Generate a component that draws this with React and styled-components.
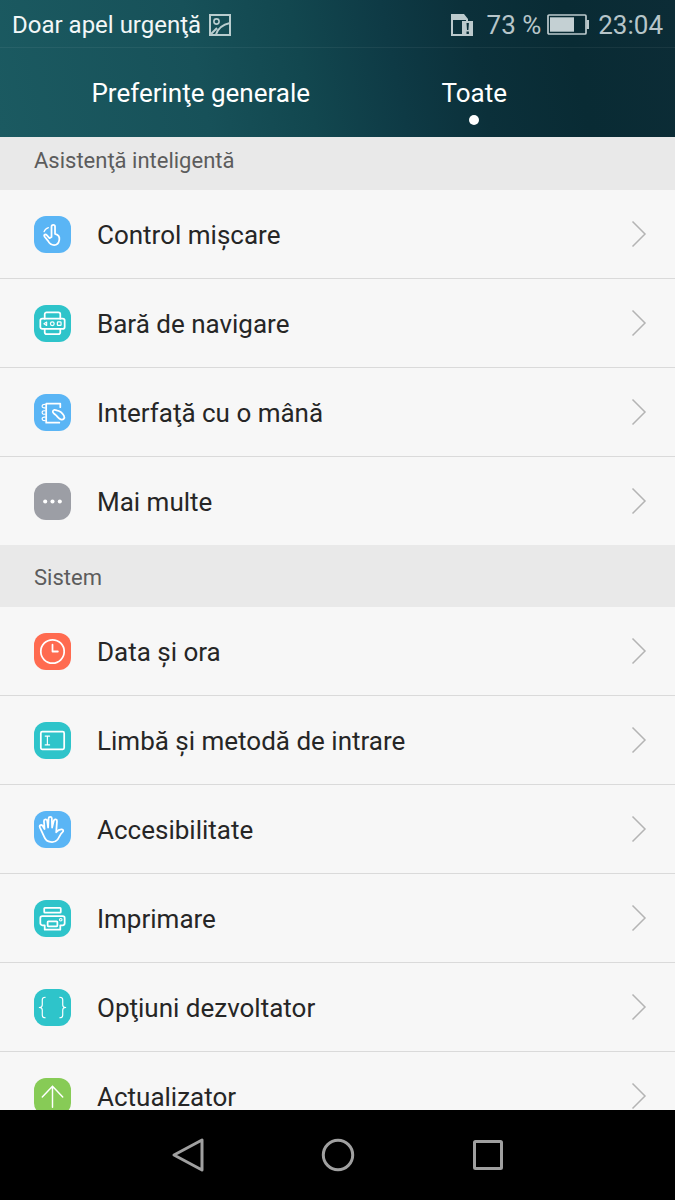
import React from 'react';
import styled, { createGlobalStyle } from 'styled-components';

const App = () => {
    return (
        <Screen>
            <GlobalStyle/>
            <Header>
                <StatusBar>
                    <StatusGroup $bright>
                        <span>Doar apel urgenţă</span>
                        <PictureIcon/>
                    </StatusGroup>
                    <StatusGroup>
                        <SimIcon/>
                        <Percent>73 %</Percent>
                        <BatteryIcon/>
                        <Clock>23:04</Clock>
                    </StatusGroup>
                </StatusBar>
                <Tabs role="tablist">
                    <Tab role="tab" aria-selected="false">Preferinţe generale</Tab>
                    <Tab role="tab" aria-selected="true">Toate</Tab>
                </Tabs>
            </Header>
            <Content>
                {sections.map((section, index) => (
                    <section key={section.title}>
                        <SectionTitle $scrolled={index === 0}>{section.title}</SectionTitle>
                        <List>
                            {section.items.map((item) => (
                                <li key={item.label}>
                                    <Row href="#">
                                        <Tile $color={item.color} viewBox="0 0 38 38" aria-hidden="true">
                                            {item.icon}
                                        </Tile>
                                        <Label>{item.label}</Label>
                                        <Chevron viewBox="0 0 16 28" aria-hidden="true">
                                            <path d="M1.5 1.5 14 14 1.5 26.5"/>
                                        </Chevron>
                                    </Row>
                                </li>
                            ))}
                        </List>
                    </section>
                ))}
            </Content>
            <NavBar>
                <NavButton aria-label="Înapoi">
                    <svg viewBox="0 0 38 38"><path d="M33 4v30L5 19z"/></svg>
                </NavButton>
                <NavButton aria-label="Acasă">
                    <svg viewBox="0 0 38 38"><circle cx="19" cy="19" r="14.7"/></svg>
                </NavButton>
                <NavButton aria-label="Recente">
                    <svg viewBox="0 0 38 38"><rect x="5.5" y="5.5" width="27" height="27" rx="1"/></svg>
                </NavButton>
            </NavBar>
        </Screen>
    );
}

const PictureIcon = () => (
    <svg width="22" height="22" viewBox="0 0 22 22" fill="none" stroke="#b9cdcf" strokeWidth="2">
        <rect x="1" y="1" width="20" height="20"/>
        <circle cx="7.5" cy="7.5" r="2.6" strokeWidth="1.6"/>
        <path d="M7 20.5C9 14 14 10.5 21 9M2 20 8 14"/>
    </svg>
);

const SimIcon = () => (
    <svg width="24" height="24" viewBox="0 0 24 24">
        <path d="M1 1h13l4 5v3h-2V7H3v14h9v2H1z" fill="#bccacd"/>
        <path d="M12 8h11v15H12z" fill="#bccacd"/>
        <path d="M16.5 10h2.4l-.5 7H17zM16.5 18.5h2.4v2.4h-2.4z" fill="#0b2f39"/>
    </svg>
);

const BatteryIcon = () => (
    <svg width="42" height="22" viewBox="0 0 42 22">
        <rect x="1" y="1" width="38" height="19" rx="1" fill="none" stroke="#bccacd" strokeWidth="1.7"/>
        <rect x="3" y="3.3" width="24" height="14.4" fill="#c4d0d3"/>
        <path d="M39.5 6H42v9h-2.5z" fill="#bccacd"/>
    </svg>
);

const BLUE = '#5ab5f5';
const TEAL = '#2ec4ca';
const GREY = '#9c9ea5';
const RED = '#ff6b50';
const GREEN = '#87cb56';

const sections = [
    {
        title: 'Asistenţă inteligentă',
        items: [
            {
                label: 'Control mișcare',
                color: BLUE,
                icon: (
                    <>
                        <path d="M18 21.5V11a1.8 1.8 0 0 1 3.6 0v7.4c3.4.9 4.9 3 4.4 6.1-.6 3.5-2.6 5.3-5.3 5.3-3 0-4.9-1.6-6.3-4.3L10.7 21c-1-1.9 1.2-2.6 2.4-1.3l2.8 3.1z"/>
                        <path d="M10.3 16.2c.7-2.2 2.2-3.6 4.5-4.3" strokeWidth="1.2"/>
                    </>
                ),
            },
            {
                label: 'Bară de navigare',
                color: TEAL,
                icon: (
                    <>
                        <rect x="6.5" y="14" width="25" height="10.5" rx="2"/>
                        <path d="M11 14V9.5a2 2 0 0 1 2-2h12a2 2 0 0 1 2 2V14M11 24.5V28a2 2 0 0 0 2 2h12a2 2 0 0 0 2-2v-3.500"/>
                        <path d="M13 17.5V21l-2.800-1.750z" strokeWidth="1.2"/>
                        <circle cx="18.8" cy="19.2" r="1.9" strokeWidth="1.3"/>
                        <rect x="24" y="17.4" width="3.8" height="3.6" rx=".8" strokeWidth="1.3"/>
                    </>
                ),
            },
            {
                label: 'Interfaţă cu o mână',
                color: BLUE,
                icon: (
                    <>
                        <path d="M27 13.5V10H12.5v19.5H26"/>
                        <path d="M11.5 10.8c-4.200-1-4.200 4.400 0 3.400M11.5 17.3c-4.200-1-4.200 4.400 0 3.400M11.5 23.8c-4.200-1-4.200 4.400 0 3.400" strokeWidth="1.2"/>
                        <path d="M19.3 17.8c.6-1.800 2.400-1.700 4-1 3.700.6 5.800 2.700 7.400 5.400 1.400 2.700-.7 4.800-3.300 3.800-2.300-.8-3.200-2.900-5.200-4.500-1.300-1.300-3.400-2.100-2.900-3.700z"/>
                    </>
                ),
            },
            {
                label: 'Mai multe',
                color: GREY,
                icon: (
                    <g fill="#fff" stroke="none">
                        <circle cx="11.5" cy="19" r="2.1"/>
                        <circle cx="19" cy="19" r="2.1"/>
                        <circle cx="26.5" cy="19" r="2.1"/>
                    </g>
                ),
            },
        ],
    },
    {
        title: 'Sistem',
        items: [
            {
                label: 'Data și ora',
                color: RED,
                icon: (
                    <>
                        <circle cx="19" cy="19" r="12"/>
                        <path d="M19 12v7h5.5"/>
                    </>
                ),
            },
            {
                label: 'Limbă și metodă de intrare',
                color: TEAL,
                icon: (
                    <>
                        <rect x="7" y="10" width="24" height="18" rx="1.5"/>
                        <path d="M11.5 14.5H16M11.5 23.5H16M13.75 14.5v9" strokeWidth="1.2"/>
                    </>
                ),
            },
            {
                label: 'Accesibilitate',
                color: BLUE,
                icon: (
                    <path d="M10.500 26.500 6 16.700c-.8-2.200 2-3.200 3-1.300l1.800 3.100-.6-8.300c0-2.200 3-2.300 3.300-.2l1 7 .5-9.500c.1-2 3.300-2 3.300 0l.3 9.500 1.800-7.200c.5-1.900 3.400-1.400 3.200.6l-.8 11.500c1.500-2 3.500-3.200 5.700-3 1.800.2 2 2 .8 2.800-2.500 2-3 4.800-5 7.500-3.500 4.300-11.300 3.600-13.800-2.700z"/>
                ),
            },
            {
                label: 'Imprimare',
                color: TEAL,
                icon: (
                    <>
                        <rect x="10.5" y="8" width="17" height="5" rx=".7"/>
                        <path d="M11 26H8.5a2 2 0 0 1-2-2v-5.500a2 2 0 0 1 2-2h21a2 2 0 0 1 2 2V24a2 2 0 0 1-2 2H27v4.500H11z"/>
                        <rect x="14" y="22" width="10" height="5" rx=".7"/>
                        <circle cx="27.5" cy="20.3" r="1.3" strokeWidth="1.1"/>
                    </>
                ),
            },
            {
                label: 'Opţiuni dezvoltator',
                color: TEAL,
                icon: (
                    <path d="M11.5 8.500c-2.200 0-3 .7-3 2.500v5.500c0 1.500-.9 2.500-3 2.500 2.100 0 3 1 3 2.500V27c0 1.800.8 2.500 3 2.500M26.5 8.500c2.200 0 3 .7 3 2.500v5.500c0 1.500.9 2.500 3 2.500-2.100 0-3 1-3 2.500V27c0 1.800-.8 2.500-3 2.500" strokeWidth="1.2"/>
                ),
            },
            {
                label: 'Actualizator',
                color: GREEN,
                icon: <path d="M19 30V8.5M8.5 19.5l10.500-11 10.500 11" strokeWidth="1.5"/>,
            },
        ],
    },
];

const GlobalStyle = createGlobalStyle`
    *{
        box-sizing: border-box;
    }
    body{
        margin: 0;
        font-family: Roboto, sans-serif;
    }
    button{
        border: 0;
        padding: 0;
        background: none;
        font: inherit;
    }
`

const Screen = styled.div`
    display: flex;
    flex-direction: column;
    height: 100vh;
    background: #f7f7f7;
`

const Header = styled.header`
    color: #fff;
    background: linear-gradient(78deg, #1b5a61 0%, #175159 30%, #12474f 45%, #0e3a45 58%, #0b303a 70%, #092b34 84%, #0c2c36 100%);
`

const StatusBar = styled.div`
    display: flex;
    justify-content: space-between;
    align-items: center;
    height: 48px;
    padding: 2px 12px 0;
    border-bottom: 1px solid rgba(255, 255, 255, 0.06);
`

const StatusGroup = styled.div`
    display: flex;
    align-items: center;
    gap: ${(props) => (props.$bright ? '8px' : '6px')};
    font-size: ${(props) => (props.$bright ? '24px' : '26px')};
    color: ${(props) => (props.$bright ? '#f2f7f7' : '#b7c5c9')};
`

const Percent = styled.span`
    margin-left: 7px;
`

const Clock = styled.time`
    margin-left: 3px;
`

const Tabs = styled.div`
    display: grid;
    grid-template-columns: 1fr 1fr;
    height: 89px;
    padding: 0 64px;
`

const Tab = styled.button`
    position: relative;
    color: #fff;
    font-size: 26px;
    &[aria-selected='true']::after{
        content: '';
        position: absolute;
        left: 50%;
        bottom: 12px;
        width: 10px;
        height: 10px;
        margin-left: -5px;
        border-radius: 50%;
        background: #fff;
    }
`

const Content = styled.main`
    flex: 1;
    min-height: 0;
    overflow: hidden;
`

const SectionTitle = styled.h2`
    margin: 0;
    padding: ${(props) => (props.$scrolled ? '10px' : '18px')} 34px 15px;
    background: #e9e9e9;
    color: #5c5c5c;
    font-size: 22px;
    font-weight: 400;
    line-height: 28px;
`

const List = styled.ul`
    margin: 0;
    padding: 0;
    list-style: none;
    li{
        border-bottom: 1px solid #dadada;
    }
    li:last-child{
        border-color: #e9e9e9;
    }
`

const Row = styled.a`
    display: flex;
    align-items: center;
    gap: 26px;
    height: 88px;
    padding: 0 28px 0 34px;
    color: #262626;
    text-decoration: none;
`

const Tile = styled.svg`
    flex: none;
    width: 37px;
    height: 37px;
    border-radius: 12px;
    background: ${(props) => props.$color};
    fill: none;
    stroke: #fff;
    stroke-width: 1.8;
    stroke-linecap: round;
    stroke-linejoin: round;
`

const Label = styled.span`
    flex: 1;
    padding-top: 2px;
    font-size: 26px;
    line-height: 32px;
`

const Chevron = styled.svg`
    flex: none;
    width: 16px;
    height: 28px;
    fill: none;
    stroke: #b4b4b4;
    stroke-width: 1.5;
`

const NavBar = styled.nav`
    display: grid;
    grid-template-columns: repeat(3, 150px);
    justify-content: center;
    height: 90px;
    background: #000;
`

const NavButton = styled.button`
    display: flex;
    align-items: center;
    justify-content: center;
    svg{
        width: 38px;
        height: 38px;
        fill: none;
        stroke: #a0a0a0;
        stroke-width: 3;
        stroke-linejoin: round;
    }
`

export default App;
